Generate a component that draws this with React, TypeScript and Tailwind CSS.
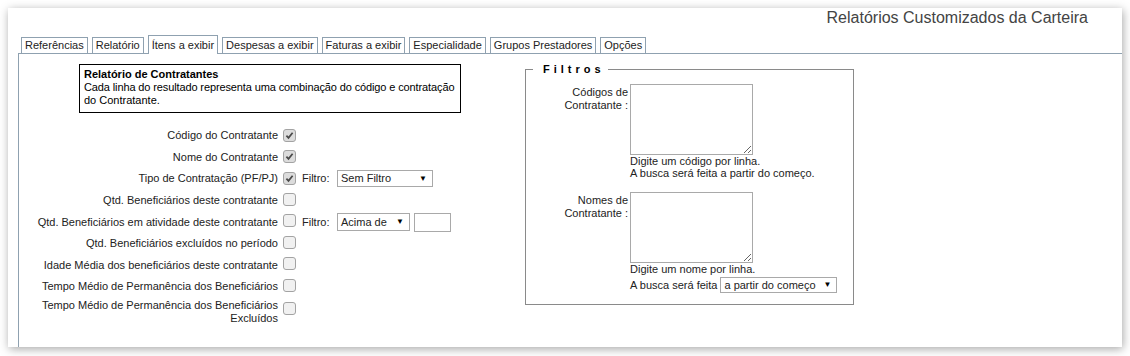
import React from 'react'

const tabs = [
    'Referências',
    'Relatório',
    'Ítens a exibir',
    'Despesas a exibir',
    'Faturas a exibir',
    'Especialidade',
    'Grupos Prestadores',
    'Opções',
]

const Check: React.FC<{ checked?: boolean }> = ({ checked }) => (
    <span
        className={`inline-flex shrink-0 w-[13px] h-[13px] items-center justify-center rounded-[3px] border border-[#a3a3a3] ${
            checked ? 'bg-[#dcdcdc]' : 'bg-[#f1f1f1]'
        }`}
    >
        {checked && (
            <svg width="9" height="9" viewBox="0 0 9 9">
                <path d="M1.4 4.6 L3.5 6.9 L7.6 1.7" stroke="#4a4a4a" strokeWidth="1.7" fill="none" />
            </svg>
        )}
    </span>
)

const FakeSelect: React.FC<{ value: string; className: string }> = ({ value, className }) => (
    <div
        className={`flex items-center justify-between border border-[#a9a9a9] bg-white pl-[3px] pr-[5px] ${className}`}
    >
        <span className="whitespace-nowrap">{value}</span>
        <span className="text-[8px] leading-none text-black">▼</span>
    </div>
)

interface RowProps {
    label: React.ReactNode
    checked?: boolean
    children?: React.ReactNode
}

const Row: React.FC<RowProps> = ({ label, checked, children }) => (
    <div className="flex items-center h-[21.6px]">
        <div className="w-[259px] text-right whitespace-nowrap">{label}</div>
        <span className="ml-[5px]">
            <Check checked={checked} />
        </span>
        {children}
    </div>
)

export default function App() {
    return (
        <div className="w-[1130px] h-[356px] bg-white pt-[8px] pl-[8px] font-['Liberation_Sans',Arial,sans-serif] text-[11px] leading-[13px] text-[#222]">
            <div className="w-[1114px] h-[339px] bg-white shadow-[1px_2px_9px_rgba(0,0,0,0.35)] flex flex-col">
                {/* Title */}
                <div className="flex justify-end pr-[34px] h-[20px] text-[16px] leading-[20px] text-[#444]">
                    Relatórios Customizados da Carteira
                </div>

                {/* Tabs */}
                <div className="mt-[7px] ml-[10px] pl-[3px] h-[18px] flex items-end gap-[4px]">
                    {tabs.map((t) =>
                        t === 'Ítens a exibir' ? (
                            <div
                                key={t}
                                className="relative z-10 -mb-px h-[19px] pt-[2px] px-[3px] leading-[15px] border border-b-0 border-[#8fa1b0] bg-white whitespace-nowrap"
                            >
                                {t}
                            </div>
                        ) : (
                            <div
                                key={t}
                                className="h-[16px] px-[3px] leading-[15px] border border-b-0 border-[#8fa1b0] bg-white whitespace-nowrap"
                            >
                                {t}
                            </div>
                        )
                    )}
                </div>

                {/* Panel */}
                <div className="flex-1 ml-[10px] border-t border-l border-[#8fa1b0] flex">
                    {/* Left column */}
                    <div className="w-[506px] shrink-0">
                        <div className="mt-[10px] ml-[60px] w-[382px] border border-black pt-[3px] pb-[5px] px-[4px] text-black">
                            <div className="font-bold">Relatório de Contratantes</div>
                            <div className="whitespace-nowrap tracking-[-0.12px]">
                                Cada linha do resultado representa uma combinação do código e contratação
                            </div>
                            <div>do Contratante.</div>
                        </div>

                        <div className="mt-[12px]">
                            <Row label="Código do Contratante" checked />
                            <Row label="Nome do Contratante" checked />
                            <Row label="Tipo de Contratação (PF/PJ)" checked>
                                <span className="ml-[6px] w-[35px]">Filtro:</span>
                                <FakeSelect value="Sem Filtro" className="w-[96px] h-[17px]" />
                            </Row>
                            <Row label="Qtd. Beneficiários deste contratante" />
                            <Row label="Qtd. Beneficiários em atividade deste contratante">
                                <span className="ml-[6px] w-[35px]">Filtro:</span>
                                <FakeSelect value="Acima de" className="w-[73px] h-[18px]" />
                                <input
                                    type="text"
                                    className="ml-[4px] w-[37px] h-[19px] border border-[#a9a9a9] bg-white"
                                />
                            </Row>
                            <Row label="Qtd. Beneficiários excluídos no período" />
                            <Row label="Idade Média dos beneficiários deste contratante" />
                            <Row label="Tempo Médio de Permanência dos Beneficiários" />
                            <div className="flex items-start">
                                <div className="w-[259px] text-right pt-[1px]">
                                    Tempo Médio de Permanência dos Beneficiários
                                    <br />
                                    Excluídos
                                </div>
                                <span className="ml-[5px] mt-[4px]">
                                    <Check />
                                </span>
                            </div>
                        </div>
                    </div>

                    {/* Filtros */}
                    <div>
                        <fieldset className="mt-[9px] w-[329px] border border-[#8a8a8a] pb-[11px]">
                            <legend className="ml-[7px] pl-[10px] pr-[3px] font-bold tracking-[4px] text-black">
                                Filtros
                            </legend>
                            <div className="pt-[8px]">
                                <div className="flex">
                                    <div className="w-[102px] text-right pt-[2px]">
                                        Códigos de
                                        <br />
                                        Contratante :
                                    </div>
                                    <div className="ml-[2px]">
                                        <textarea className="block w-[123px] h-[71px] border border-[#a9a9a9] bg-white" />
                                        <div className="leading-[12px] whitespace-nowrap">
                                            Digite um código por linha.
                                            <br />
                                            A busca será feita a partir do começo.
                                        </div>
                                    </div>
                                </div>

                                <div className="flex mt-[13px]">
                                    <div className="w-[102px] text-right pt-[2px]">
                                        Nomes de
                                        <br />
                                        Contratante :
                                    </div>
                                    <div className="ml-[2px]">
                                        <textarea className="block w-[123px] h-[71px] border border-[#a9a9a9] bg-white" />
                                        <div className="leading-[12px]">Digite um nome por linha.</div>
                                        <div className="flex items-center mt-[2px] whitespace-nowrap">
                                            <span>A busca será feita</span>
                                            <FakeSelect
                                                value="a partir do começo"
                                                className="ml-[3px] w-[117px] h-[16px]"
                                            />
                                        </div>
                                    </div>
                                </div>
                            </div>
                        </fieldset>
                    </div>
                </div>
            </div>
        </div>
    )
}
